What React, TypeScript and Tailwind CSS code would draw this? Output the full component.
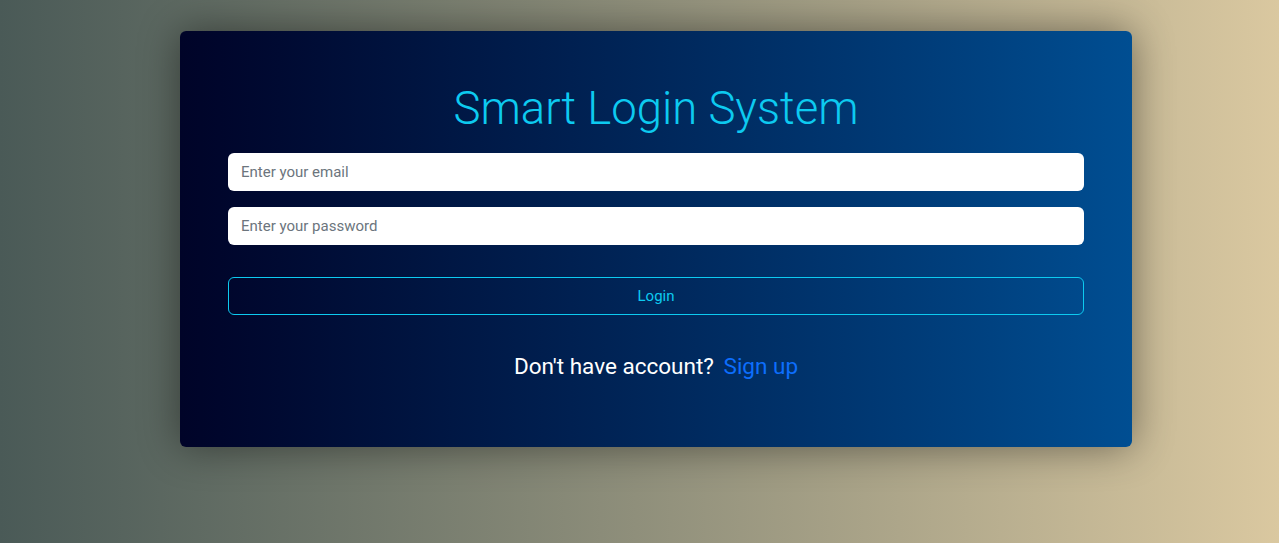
export default function App() {
  return (
    <div
      className="min-h-screen w-full bg-gradient-to-r from-[#4a5a57] to-[#dac8a0] pt-[31px]"
      style={{ fontFamily: "Roboto, 'Open Sans', sans-serif" }}
    >
      <div className="ml-[180px] flex h-[416px] w-[952px] flex-col rounded-md bg-gradient-to-r from-[#000428] to-[#004e92] px-12 pt-[48px] shadow-[0_0_40px_rgba(0,0,0,0.45)]">
        <h1 className="h-[60px] text-center text-[45.5px] leading-[60px] font-light text-[#0dcaf0]">
          Smart Login System
        </h1>
        <input
          type="email"
          placeholder="Enter your email"
          className="mt-[14px] h-[38px] w-full rounded-md bg-white px-[13px] text-[15px] text-gray-800 placeholder:text-[#6c757d] outline-none"
        />
        <input
          type="password"
          placeholder="Enter your password"
          className="mt-4 h-[38px] w-full rounded-md bg-white px-[13px] text-[15px] text-gray-800 placeholder:text-[#6c757d] outline-none"
        />
        <button className="mt-8 h-[38px] w-full rounded-md border border-[#0dcaf0] text-[15px] text-[#0dcaf0]">
          Login
        </button>
        <p className="mt-[35px] text-center text-[22.5px] leading-8 text-white">
          Don't have account?{" "}
          <a href="#" className="ml-1 text-[#0d6efd]">
            Sign up
          </a>
        </p>
      </div>
    </div>
  );
}
